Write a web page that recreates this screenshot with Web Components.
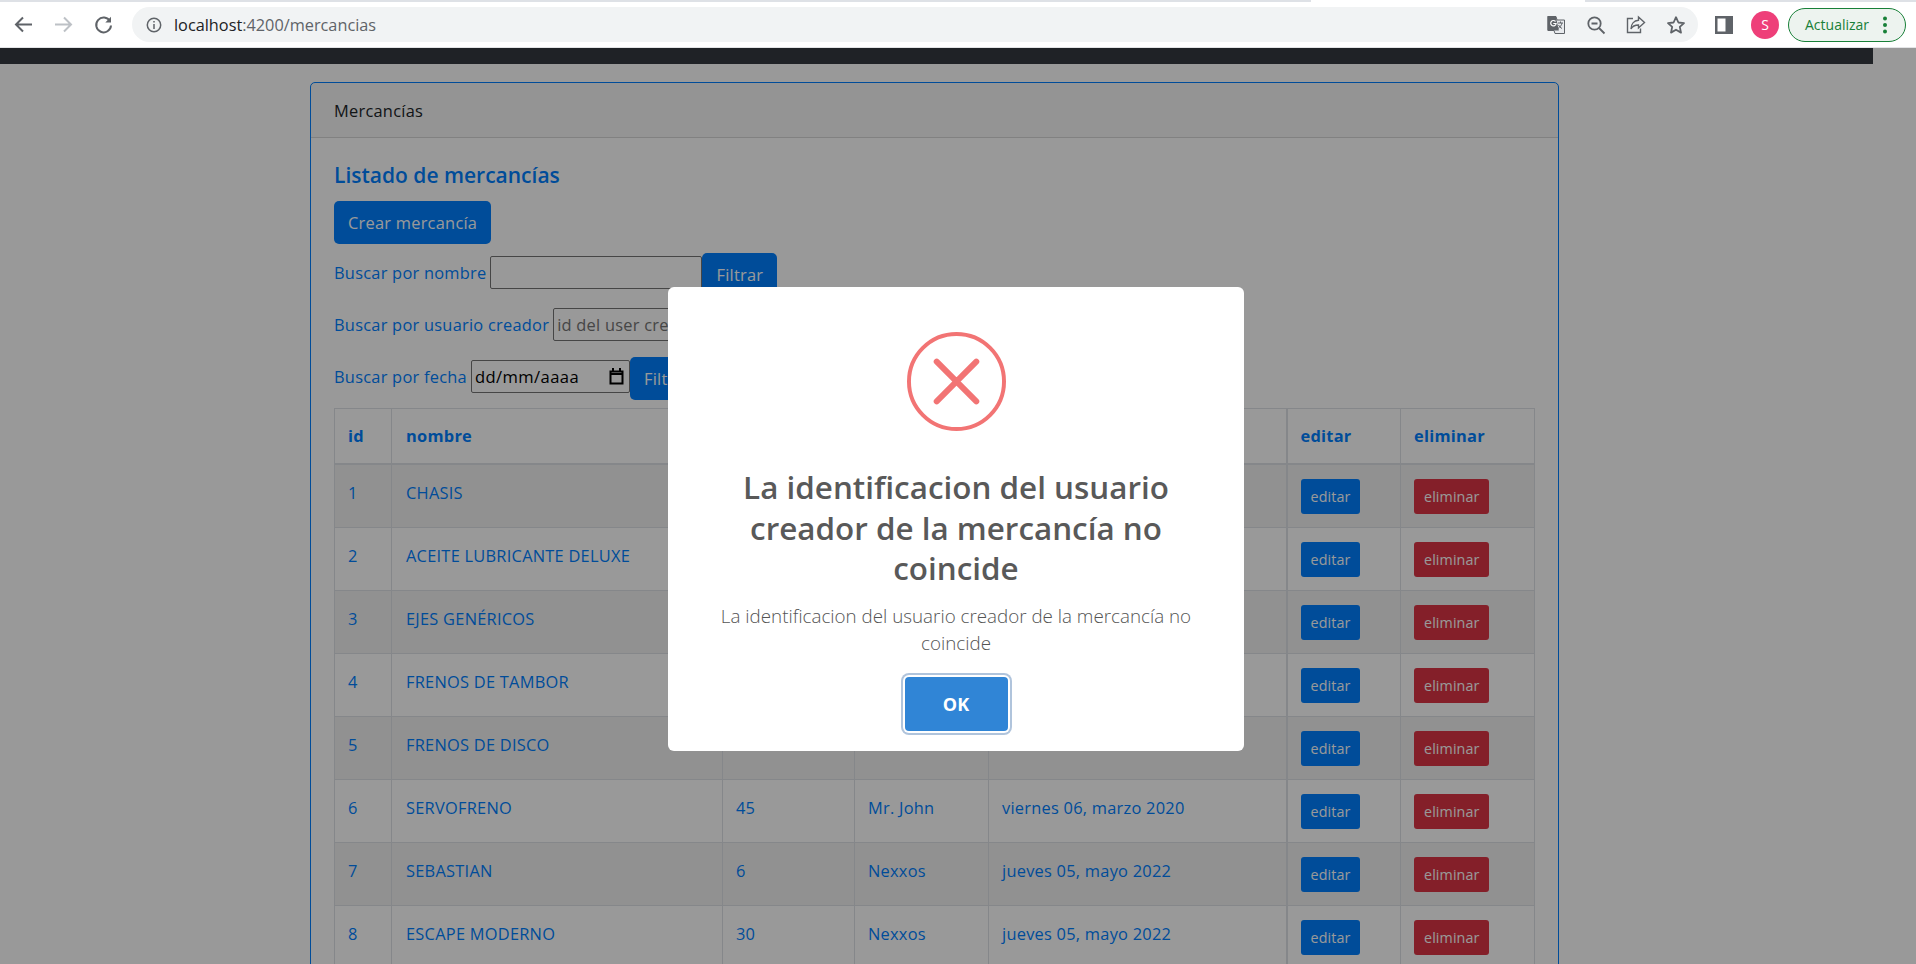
<!DOCTYPE html>
<html lang="es">
<head>
<meta charset="utf-8">
<title>Mercancías</title>
<style>
html, body { margin: 0; padding: 0; height: 964px; overflow: hidden; background: #fff; font-family: "Open Sans", "Noto Sans", sans-serif; }
</style>
</head>
<body>
<browser-bar url-host="localhost" url-path=":4200/mercancias"></browser-bar>
<page-view>
  <app-card heading="Mercancías">
    <h2 slot="title">Listado de mercancías</h2>
    <primary-button slot="action" size="lg">Crear mercancía</primary-button>
    <search-row slot="search" label="Buscar por nombre" input-width="212"></search-row>
    <search-row slot="search" label="Buscar por usuario creador" placeholder="id del user creador" input-width="212"></search-row>
    <search-row slot="search" label="Buscar por fecha" type="date" input-width="159"></search-row>
    <goods-table slot="table"></goods-table>
  </app-card>
  <error-alert slot="modal" title-text="La identificacion del usuario creador de la mercancía no coincide">La identificacion del usuario creador de la mercancía no coincide</error-alert>
</page-view>

<script>
const barTemplate = document.createElement("template");
barTemplate.innerHTML = `
<style>
:host { display: block; height: 48px; background: #fff; position: relative; box-sizing: border-box; border-bottom: 1px solid #e3e4e6; font-family: "Open Sans", sans-serif; }
.strip { height: 2px; background: linear-gradient(to right, #dee1e6 0, #dee1e6 1311px, #fff 1311px, #fff 1585px, #dee1e6 1585px); }
.row { display: flex; align-items: center; height: 35px; margin-top: 5px; padding-left: 13px; }
.nav { display: flex; gap: 19px; margin-right: 18px; }
svg { display: block; flex: none; }
.omni { flex: none; width: 1566px; height: 35px; border-radius: 18px; background: #f1f3f4; display: flex; align-items: center; box-sizing: border-box; padding-left: 14px; }
.url { margin-left: 12px; font-size: 16.300px; color: #202124; white-space: nowrap; }
.url span { color: #5f6368; }
.tools { margin-left: auto; display: flex; align-items: center; gap: 20px; padding-right: 12px; }
.panel { margin-left: 17px; }
.avatar { width: 28px; height: 28px; border-radius: 50%; background: #ee3f79; color: #fff; font-size: 14px; display: flex; align-items: center; justify-content: center; margin-left: 18px; }
.update { margin-left: 9px; width: 118px; height: 34px; box-sizing: border-box; border: 1px solid #188038; border-radius: 17px; background: #edf3ef; color: #188038; display: flex; align-items: center; font-size: 14px; padding-left: 16px; gap: 14px; }
</style>
<div class="strip"></div>
<div class="row">
  <div class="nav">
    <svg width="21" height="21" viewBox="0 0 21 21" fill="none" stroke="#5f6368" stroke-width="2"><path d="M19 10.500H3M10 3.500l-7 7 7 7"/></svg>
    <svg width="21" height="21" viewBox="0 0 21 21" fill="none" stroke="#bdc1c6" stroke-width="2"><path d="M2 10.500h16M11 3.500l7 7-7 7"/></svg>
    <svg width="21" height="21" viewBox="0 0 21 21" fill="none" stroke="#5f6368" stroke-width="2"><path d="M17 7.200A7.400 7.400 0 1 0 18 11.500"/><path d="M18 2.800v5.700h-5.700z" fill="#5f6368" stroke="none"/></svg>
  </div>
  <div class="omni">
    <svg width="16" height="16" viewBox="0 0 16 16" fill="none" stroke="#5f6368" stroke-width="1.500"><circle cx="8" cy="8" r="6.700"/><path d="M8 7v5M8 4v1.600"/></svg>
    <div class="url"><slot name="host"></slot><span class="path"></span></div>
    <div class="tools">
      <svg width="20" height="20" viewBox="0 0 20 20"><path d="M2 1.500h8l1 3.500h7.500v13.500H9l-1-3H2z" fill="#e8eaed" stroke="#5f6368" stroke-width="1"/><path d="M1.500 1h8.200l3.200 14.500H1.500z" fill="#5f6368"/><path d="M9.500 6.500a2.700 2.700 0 1 0 .6 2H7.300" fill="none" stroke="#fff" stroke-width="1.200"/><path d="M12 8h5M14.500 6.500V8M16 8c-.5 2.500-2 4-4 5.500M12.500 10c.8 1.500 2 2.800 3.500 3.500" fill="none" stroke="#5f6368" stroke-width="1"/></svg>
      <svg width="20" height="20" viewBox="0 0 20 20" fill="none" stroke="#5f6368" stroke-width="1.800"><circle cx="8.500" cy="8.500" r="6.200"/><path d="M5.500 8.500h6M13 13l5.500 5.500"/></svg>
      <svg width="20" height="20" viewBox="0 0 20 20" fill="none" stroke="#5f6368" stroke-width="1.400"><path d="M7 3.500H1.500v14h13v-4"/><path d="M12.500 2l6 5.500-6 5.500V10C9 10 6.500 11 5 14c0-5 3-8.500 7.500-8.800z"/></svg>
      <svg width="20" height="20" viewBox="0 0 20 20" fill="none" stroke="#5f6368" stroke-width="1.800"><path d="M10 2.200l2.400 5.300 5.600.6-4.200 3.800 1.200 5.700-5-2.900-5 2.900 1.200-5.700L2 8.100l5.600-.6z" stroke-linejoin="round"/></svg>
    </div>
  </div>
  <svg class="panel" width="18" height="18" viewBox="0 0 18 18"><path d="M0 0h18v18H0z" fill="#5f6368"/><path d="M2.500 2.500h8v13h-8z" fill="#fff"/></svg>
  <div class="avatar">S</div>
  <div class="update">
    <slot name="update"></slot>
    <svg width="4" height="18" viewBox="0 0 4 18" fill="#188038"><circle cx="2" cy="2.500" r="2"/><circle cx="2" cy="9" r="2"/><circle cx="2" cy="15.500" r="2"/></svg>
  </div>
</div>
`;

class BrowserBar extends HTMLElement {
  constructor() {
    super();
    this.attachShadow({ mode: "open" });
    this.shadowRoot.appendChild(barTemplate.content.cloneNode(true));
    const host = document.createElement("span");
    host.slot = "host";
    host.textContent = this.getAttribute("url-host");
    const update = document.createElement("span");
    update.slot = "update";
    update.textContent = "Actualizar";
    this.append(host, update);
    this.shadowRoot.querySelector(".path").textContent = this.getAttribute("url-path");
  }
}

const viewTemplate = document.createElement("template");
viewTemplate.innerHTML = `
<style>
:host { display: block; position: relative; height: 916px; overflow: hidden; background: #fff; font-family: "Open Sans", sans-serif; }
.nav { height: 16px; width: 1873px; background: #343a40; }
.main { padding: 18px 0 0 310px; }
.overlay { position: absolute; inset: 0; background: rgba(0,0,0,.4); display: block; }
.dialog { position: absolute; left: 668px; top: 239px; }
</style>
<div class="nav"></div>
<div class="main"><slot></slot></div>
<div class="overlay"></div>
<div class="dialog"><slot name="modal"></slot></div>
`;

class PageView extends HTMLElement {
  constructor() {
    super();
    this.attachShadow({ mode: "open" });
    this.shadowRoot.appendChild(viewTemplate.content.cloneNode(true));
  }
}

const cardTemplate = document.createElement("template");
cardTemplate.innerHTML = `
<style>
:host { display: block; width: 1249px; box-sizing: border-box; border: 1px solid #007fff; border-radius: 5px; color: #007fff; font-size: 16.400px; letter-spacing: .25px; }
.head { height: 55px; box-sizing: border-box; background: rgba(0,0,0,.03); border-bottom: 1px solid rgba(0,0,0,.125); padding: 0 23px; display: flex; align-items: center; color: #212529; }
.body { padding: 24px 23px 0; }
::slotted(h2) { margin: 0 0 12px; font-size: 21px; line-height: 27px; font-weight: 600; color: #007fff; letter-spacing: 0; }
.action { margin-bottom: 9px; }
</style>
<div class="head"></div>
<div class="body">
  <slot name="title"></slot>
  <div class="action"><slot name="action"></slot></div>
  <slot name="search"></slot>
  <slot name="table"></slot>
</div>
`;

class AppCard extends HTMLElement {
  constructor() {
    super();
    this.attachShadow({ mode: "open" });
    this.shadowRoot.appendChild(cardTemplate.content.cloneNode(true));
    this.shadowRoot.querySelector(".head").textContent = this.getAttribute("heading");
  }
}

const buttonTemplate = document.createElement("template");
buttonTemplate.innerHTML = `
<style>
:host { display: inline-flex; align-items: center; justify-content: center; box-sizing: border-box; background: #007fff; color: #fff; border-radius: 5px; height: 43px; padding: 0 14px; white-space: nowrap; }
:host([size="sm"]) { height: 35px; padding: 0 10px; font-size: 14.300px; letter-spacing: .1px; border-radius: 3px; }
:host([tone="danger"]) { background: #dc3545; }
</style>
<slot></slot>
`;

class PrimaryButton extends HTMLElement {
  constructor() {
    super();
    this.attachShadow({ mode: "open" });
    this.shadowRoot.appendChild(buttonTemplate.content.cloneNode(true));
  }
}

const searchTemplate = document.createElement("template");
searchTemplate.innerHTML = `
<style>
:host { display: flex; align-items: flex-start; height: 43px; margin-bottom: 9px; color: #007fff; }
label { margin: 3px 4px 0 0; line-height: 33px; white-space: nowrap; }
input, .date { margin-top: 3px; box-sizing: border-box; height: 33px; border: 1px solid #767676; border-radius: 2px; background: #fff; padding: 0 3px; font: 16.400px "Open Sans", sans-serif; letter-spacing: .25px; color: #000; }
input::placeholder { color: #757575; }
.date { display: flex; align-items: center; justify-content: space-between; padding: 0 5px 0 3px; font-size: 16.600px; letter-spacing: .4px; }
.date svg { display: block; }
</style>
<label></label>
<span class="field"></span>
<primary-button>Filtrar</primary-button>
`;

class SearchRow extends HTMLElement {
  constructor() {
    super();
    this.attachShadow({ mode: "open" });
    this.shadowRoot.appendChild(searchTemplate.content.cloneNode(true));
    this.shadowRoot.querySelector("label").textContent = this.getAttribute("label");
    const width = this.getAttribute("input-width") + "px";
    const slotBox = this.shadowRoot.querySelector(".field");
    if (this.getAttribute("type") === "date") {
      // the native date field shows the browser's locale, the reference is in Spanish
      const box = document.createElement("div");
      box.className = "date";
      box.style.width = width;
      box.innerHTML = `<span>dd/mm/aaaa</span><svg width="15" height="17" viewBox="0 0 15 17" fill="none" stroke="#000" stroke-width="2"><path d="M1.500 3.500h12v12h-12zM1.500 6h12M4 0v3M11 0v3"/></svg>`;
      slotBox.replaceWith(box);
    } else {
      const input = document.createElement("input");
      input.placeholder = this.getAttribute("placeholder") || "";
      input.style.width = width;
      slotBox.replaceWith(input);
    }
  }
}

const goods = [
  [1, "CHASIS"], [2, "ACEITE LUBRICANTE DELUXE"], [3, "EJES GENÉRICOS"],
  [4, "FRENOS DE TAMBOR"], [5, "FRENOS DE DISCO"],
  [6, "SERVOFRENO", 45, "Mr. John", "viernes 06, marzo 2020"],
  [7, "SEBASTIAN", 6, "Nexxos", "jueves 05, mayo 2022"],
  [8, "ESCAPE MODERNO", 30, "Nexxos", "jueves 05, mayo 2022"]
];

const tableTemplate = document.createElement("template");
tableTemplate.innerHTML = `
<style>
:host { display: block; color: #007fff; margin-top: -1px; }
table { border-collapse: collapse; table-layout: fixed; width: 1200px; }
th, td { border: 1px solid #dee2e6; padding: 14px 13px 13px; text-align: left; vertical-align: top; line-height: 27px; }
th:nth-child(2), td:nth-child(2) { padding-left: 14px; }
th { padding-top: 13px; height: 55px; box-sizing: border-box; font-weight: 700; border-bottom: 2px solid #dee2e6; }
tbody tr:nth-child(odd) { background: rgba(0,0,0,.05); }
td { height: 63px; box-sizing: border-box; }
td primary-button { vertical-align: top; }
.split { border-left: 2px solid #dee2e6; }
</style>
<table>
  <colgroup><col style="width:57px"><col style="width:331px"><col style="width:132px"><col style="width:134px"><col style="width:298px"><col style="width:114px"><col style="width:134px"></colgroup>
  <thead><tr><th>id</th><th>nombre</th><th></th><th></th><th></th><th class="split">editar</th><th>eliminar</th></tr></thead>
  <tbody></tbody>
</table>
`;

class GoodsTable extends HTMLElement {
  constructor() {
    super();
    this.attachShadow({ mode: "open" });
    this.shadowRoot.appendChild(tableTemplate.content.cloneNode(true));
    const body = this.shadowRoot.querySelector("tbody");
    goods.forEach(g => {
      const tr = document.createElement("tr");
      tr.innerHTML = `<td>${g[0]}</td><td>${g[1]}</td><td>${g[2] || ""}</td><td>${g[3] || ""}</td><td>${g[4] || ""}</td>
        <td class="split"><primary-button size="sm">editar</primary-button></td>
        <td><primary-button size="sm" tone="danger">eliminar</primary-button></td>`;
      body.appendChild(tr);
    });
  }
}

const alertTemplate = document.createElement("template");
alertTemplate.innerHTML = `
<style>
:host { display: flex; flex-direction: column; align-items: center; box-sizing: border-box; width: 576px; height: 464px; padding-top: 45px; background: #fff; border-radius: 6px; font-family: "Open Sans", sans-serif; text-align: center; }
svg { display: block; }
h2 { margin: 36px 0 0; width: 500px; font-size: 31.400px; line-height: 40.500px; font-weight: 600; color: #595959; }
p { margin: 14px 0 0; width: 490px; font-size: 18.800px; line-height: 27px; font-weight: 300; color: #545454; }
button { margin-top: 20px; box-sizing: border-box; width: 103px; height: 54px; border: 0; border-radius: 4px; background: #3085d6; color: #fff; font: 700 18px "Open Sans", sans-serif; box-shadow: 0 0 0 2px #fff, 0 0 0 4px #b0c4dc; }
</style>
<svg width="99" height="99" viewBox="0 0 100 100" fill="none" stroke="#f27474"><circle cx="50" cy="50" r="48" stroke-width="4"/><path d="M30 30l40 40M70 30L30 70" stroke-width="6" stroke-linecap="round"/></svg>
<h2></h2>
<p><slot></slot></p>
<button>OK</button>
`;

class ErrorAlert extends HTMLElement {
  constructor() {
    super();
    this.attachShadow({ mode: "open" });
    this.shadowRoot.appendChild(alertTemplate.content.cloneNode(true));
    this.shadowRoot.querySelector("h2").textContent = this.getAttribute("title-text");
  }
}

customElements.define("primary-button", PrimaryButton);
customElements.define("browser-bar", BrowserBar);
customElements.define("page-view", PageView);
customElements.define("app-card", AppCard);
customElements.define("search-row", SearchRow);
customElements.define("goods-table", GoodsTable);
customElements.define("error-alert", ErrorAlert);
</script>
</body>
</html>
